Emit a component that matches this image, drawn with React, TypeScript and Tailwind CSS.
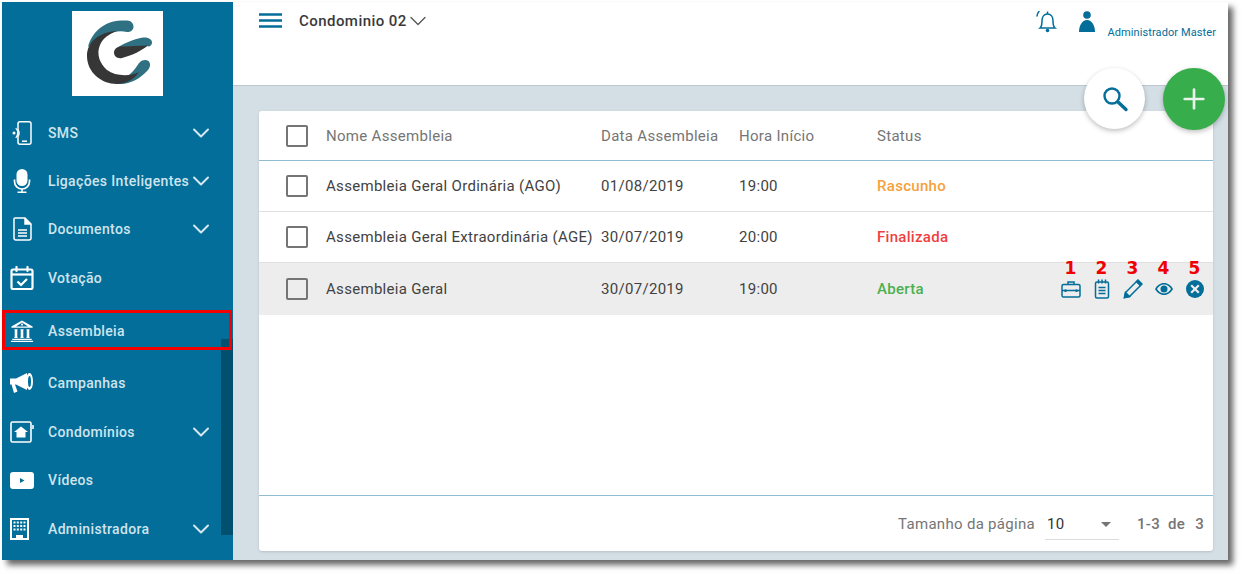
import React from 'react';
import { ChevronDown, Plus } from 'lucide-react';

const IconSms = () => (
  <svg width="24" height="24" viewBox="0 0 24 24" fill="none" stroke="currentColor" strokeWidth="1.500">
    <rect x="8" y="0.800" width="13" height="22.400" rx="2" />
    <path d="M12 20.200h5" />
    <path d="M8 8.500c1.400 2 1.400 5 0 7M5.800 7c2.200 2.800 2.200 7 0 10" strokeWidth="1.200" />
    <circle cx="4" cy="12" r="1.500" fill="currentColor" stroke="none" />
  </svg>
);

const IconMic = () => (
  <svg width="24" height="24" viewBox="0 0 24 24" fill="currentColor">
    <rect x="6.500" y="0" width="11" height="17" rx="5.500" />
    <path d="M4.500 10.500v2a7.500 7.500 0 0 0 15 0v-2" fill="none" stroke="currentColor" strokeWidth="1.700" />
    <path d="M12 20v3M7.500 23.200h9" fill="none" stroke="currentColor" strokeWidth="1.500" />
  </svg>
);

const IconDoc = () => (
  <svg width="24" height="24" viewBox="0 0 24 24" fill="none" stroke="currentColor" strokeWidth="1.500">
    <path d="M5 1h10l6 6v14a2 2 0 0 1-2 2H6a2 2 0 0 1-2-2V2a1 1 0 0 1 1-1z" />
    <path d="M15 1v6h6" fill="currentColor" />
    <path d="M8 13h9M8 16h9M8 19h9" />
  </svg>
);

const IconVote = () => (
  <svg width="24" height="24" viewBox="0 0 24 24" fill="none" stroke="currentColor" strokeWidth="2.200">
    <rect x="1.500" y="3.500" width="21" height="19.500" rx="1.500" />
    <path d="M1.500 8.500h21" />
    <path d="M6.500 1v4M17.500 1v4" strokeLinecap="round" />
    <path d="M7.500 15.500l3.500 3.500 6-6" />
  </svg>
);

const IconBank = () => (
  <svg width="24" height="24" viewBox="0 0 26 24" fill="currentColor">
    <path d="M13 0.500L1.500 7v1.500h23V7L13 0.500zm0 2.200l6.500 4.300h-13L13 2.700z" />
    <circle cx="13" cy="5" r="1.200" />
    <path d="M4.500 10h4l-.6 1v7.500l.6 1h-4l.6-1V11zM11 10h4l-.6 1v7.500l.6 1h-4l.6-1V11zM17.500 10h4l-.6 1v7.500l.6 1h-4l.6-1V11z" />
    <path d="M2.500 20.500h21v1.200h-21zM1 22.500h24V24H1z" />
  </svg>
);

const IconMegaphone = () => (
  <svg width="24" height="22" viewBox="0 0 24 22" fill="currentColor">
    <path d="M0 6.500h6L17 1v17L6 12.500H5l2.500 7-3.500 1.500-2.500-8.500H0z" />
    <ellipse cx="19.500" cy="9.500" rx="3.500" ry="8.500" />
    <ellipse cx="19.500" cy="9.500" rx="1.500" ry="5.500" fill="#026e99" />
  </svg>
);

const IconCondo = () => (
  <svg width="24" height="22" viewBox="0 0 24 22" fill="none" stroke="currentColor" strokeWidth="1.600">
    <rect x="1" y="1" width="20" height="20" rx="1.500" />
    <path d="M23 4v4" />
    <path d="M11 5.500l-7 5.500h2.500v5.500h9V11H18z" fill="currentColor" stroke="none" />
  </svg>
);

const IconVideo = () => (
  <svg width="24" height="17" viewBox="0 0 24 17" fill="currentColor">
    <path fillRule="evenodd" d="M3 0h18a3 3 0 0 1 3 3v11a3 3 0 0 1-3 3H3a3 3 0 0 1-3-3V3a3 3 0 0 1 3-3zm7 6v5l4.500-2.500z" />
  </svg>
);

const IconBuilding = () => (
  <svg className="-ml-[5px]" width="19" height="22" viewBox="0 0 19 22" fill="currentColor">
    <path
      fillRule="evenodd"
      d="M0 0h19v22H0zM2 2v18h4v-3h7v3h4V2zM3.500 3.500h2v2h-2zm3.300 0h2v2h-2zm3.400 0h2v2h-2zm3.300 0h2v2h-2zM3.500 7h2v2h-2zm3.300 0h2v2h-2zm3.400 0h2v2h-2zm3.300 0h2v2h-2zM3.500 10.500h2v2h-2zm3.300 0h2v2h-2zm3.400 0h2v2h-2zm3.300 0h2v2h-2z"
    />
  </svg>
);

const LogoMark = () => (
  <svg width="66" height="66" viewBox="0 0 66 66">
    <path d="M1 27C4 14 16 1 34 .5L40 .5C44 .5 46.500 3.500 46.500 6.500C46.500 10 44 12 40 12C30 10 18 12 1 27Z" fill="#2f7183" />
    <path d="M28 63.500C40 66 52 60 61 50C65 45 63 40 58 40C54 40 52 43 50 46C46 52 40 58 28 63.500Z" fill="#2f7183" />
    <path d="M28 29C36 24 46 19 56 17.500C62 17 65.500 20 65 23C64.500 26 62 27 60 26L34 27Z" fill="#2f7183" />
    <path d="M30 11C12 12 0 22 0 36C0 52 14 64 30 64C38 64 47 60 52 52C42 57 28 56 20 50C13 44 9 34 13 25C16 18 22 14 30 11Z" fill="#363636" />
    <path d="M33 26.500L61 25.500C54 31 46 35 35 38C30 39 27 36 27 32.500C27 29 30 27 33 26.500Z" fill="#363636" />
  </svg>
);

const IconHamburger = () => (
  <svg width="23" height="15" viewBox="0 0 23 15" stroke="#026e99" strokeWidth="2.400">
    <path d="M0 1.500h23M0 7.500h23M0 13.500h23" />
  </svg>
);

const IconBell = () => (
  <svg width="22" height="24" viewBox="0 0 22 24" fill="none" stroke="currentColor" strokeWidth="1.500">
    <path d="M4 18c1.800-1.500 2-3.500 2-7 0-4 2-7 5.500-7s5.500 3 5.500 7c0 3.500.2 5.500 2 7z" />
    <path d="M11.500 1.500V4" />
    <circle cx="11.500" cy="20.500" r="1.800" fill="currentColor" stroke="none" />
    <path d="M1 6c0-2 1-3.500 2-4.500" strokeLinecap="round" />
  </svg>
);

const IconUser = () => (
  <svg width="16" height="22" viewBox="0 0 16 22" fill="currentColor">
    <circle cx="8" cy="4" r="3.800" />
    <path d="M0 21c0-6 3-12 8-12s8 6 8 12z" />
  </svg>
);

const IconSearch = () => (
  <svg width="28" height="28" viewBox="0 0 28 28" fill="none" stroke="#026e99">
    <circle cx="11" cy="11" r="7.500" strokeWidth="2.400" />
    <path d="M17 17l8 7.500" strokeWidth="3.400" strokeLinecap="round" />
  </svg>
);

const IconCase = () => (
  <svg width="20" height="18" viewBox="0 0 20 18" fill="none" stroke="#026e99" strokeWidth="1.500">
    <rect x="1" y="4.500" width="18" height="12.500" rx="1.500" />
    <path d="M7 4.500V2h6v2.500M1 10.500h18" />
    <path d="M4.500 9.500v2.500M15.500 9.500v2.500" strokeWidth="2" />
  </svg>
);

const IconNotes = () => (
  <svg width="16" height="20" viewBox="0 0 16 20" fill="none" stroke="#026e99" strokeWidth="1.500">
    <rect x="1.500" y="3" width="13" height="16" rx="1.500" />
    <path d="M4.500 0.500v4M8 0.500v4M11.500 0.500v4" />
    <path d="M4.500 8.500h7M4.500 11.500h7M4.500 14.500h7" />
  </svg>
);

const IconPen = () => (
  <svg width="20" height="20" viewBox="0 0 20 20" fill="none" stroke="#026e99" strokeWidth="1.500">
    <path d="M1.500 18.500l1-5L13.500 2.500l4 4-11 11z" />
    <path d="M1.500 18.500l1-5 4 4z" fill="#026e99" />
    <path d="M13.500 2.500l1.500-1.500 4 4-1.500 1.500z" fill="#026e99" />
  </svg>
);

const IconEye = () => (
  <svg width="18" height="12" viewBox="0 0 18 12">
    <path d="M0 6c2-3.500 5-6 9-6s7 2.500 9 6c-2 3.500-5 6-9 6S2 9.500 0 6z" fill="#026e99" />
    <path d="M2 6c1.600-2.500 4-4.400 7-4.400S14.400 3.500 16 6c-1.600 2.500-4 4.400-7 4.400S3.600 8.500 2 6z" fill="#ededed" />
    <circle cx="9" cy="6" r="3.500" fill="#026e99" />
  </svg>
);

const IconClose = () => (
  <svg width="18" height="18" viewBox="0 0 18 18">
    <circle cx="9" cy="9" r="9" fill="#026e99" />
    <path d="M5.200 5.200l7.600 7.600M12.800 5.200l-7.600 7.600" stroke="#ededed" strokeWidth="2.200" />
  </svg>
);

const NAV_ITEMS = [
  { label: 'SMS', icon: <IconSms />, hasArrow: true, height: 'h-[48px]' },
  { label: 'Ligações Inteligentes', icon: <IconMic />, hasArrow: true, height: 'h-[48px]' },
  { label: 'Documentos', icon: <IconDoc />, hasArrow: true, height: 'h-[48px]' },
  { label: 'Votação', icon: <IconVote />, hasArrow: false, height: 'h-[50px]' },
  { label: 'Assembleia', icon: <IconBank />, hasArrow: false, height: 'h-[55px]', highlighted: true },
  { label: 'Campanhas', icon: <IconMegaphone />, hasArrow: false, height: 'h-[50px]' },
  { label: 'Condomínios', icon: <IconCondo />, hasArrow: true, height: 'h-[48px]' },
  { label: 'Vídeos', icon: <IconVideo />, hasArrow: false, height: 'h-[49px]' },
  { label: 'Administradora', icon: <IconBuilding />, hasArrow: true, height: 'h-[48px]' }
];

const ROWS = [
  { name: 'Assembleia Geral Ordinária (AGO)', date: '01/08/2019', time: '19:00', status: 'Rascunho', color: 'text-[#f5a13c]', height: 'h-[51px]' },
  { name: 'Assembleia Geral Extraordinária (AGE)', date: '30/07/2019', time: '20:00', status: 'Finalizada', color: 'text-[#ef3f3f]', height: 'h-[51px]' },
  { name: 'Assembleia Geral', date: '30/07/2019', time: '19:00', status: 'Aberta', color: 'text-[#4caf50]', height: 'h-[52px]', active: true }
];

const ACTIONS = [
  { num: '1', icon: <IconCase /> },
  { num: '2', icon: <IconNotes /> },
  { num: '3', icon: <IconPen /> },
  { num: '4', icon: <IconEye /> },
  { num: '5', icon: <IconClose /> }
];

function Checkbox() {
  return <div className="w-[22px] h-[22px] rounded-[2px] border-2 border-[#757575] shrink-0" />;
}

function Sidebar() {
  return (
    <aside className="relative w-[231px] shrink-0 bg-[#026e99] text-white flex flex-col">
      <div className="flex justify-center pt-[9px] h-[107px] pr-[1px]">
        <div className="w-[91px] h-[85px] bg-white flex items-center justify-center pl-[6px] pb-[1px]">
          <LogoMark />
        </div>
      </div>
      <nav className="flex flex-col">
        {NAV_ITEMS.map(item => (
          <div
            key={item.label}
            className={`${item.height} relative flex items-center pl-[8px] ${item.highlighted ? 'pt-[1px]' : ''}`}
          >
            <div className="w-[24px] flex justify-center shrink-0">{item.icon}</div>
            <span className="ml-[14px] text-[14px] font-medium tracking-[0.35px] text-[#cfe4ee] whitespace-nowrap">
              {item.label}
            </span>
            {item.hasArrow && (
              <ChevronDown className="absolute left-[185px] top-1/2 -translate-y-1/2 w-[28px] h-[28px] text-[#d8e8f0]" strokeWidth={1.7} />
            )}
          </div>
        ))}
      </nav>
      {/* scrollbar */}
      <div className="absolute left-[219px] top-[337px] w-[12px] h-[196px] bg-[#024f6f]" />
      {/* destaque da imagem */}
      <div className="absolute left-[0px] top-[308px] w-[230px] h-[40px] border-[3px] border-[#f50000]" />
    </aside>
  );
}

function Header() {
  return (
    <header className="h-[84px] shrink-0 bg-white border-b border-[#bcc8cf] flex items-start relative">
      <div className="ml-[26px] mt-[11px]">
        <IconHamburger />
      </div>
      <div className="ml-[17px] mt-[8px] flex items-center text-[15px] font-medium text-[#3a3a3a] tracking-[0.45px]">
        Condominio 02
        <ChevronDown className="-ml-[3px] w-[28px] h-[28px] -my-[4px] text-[#555]" strokeWidth={1.1} />
      </div>
      <div className="ml-auto flex items-start text-[#026e99]">
        <div className="mt-[8px]">
          <IconBell />
        </div>
        <div className="ml-[21px] mt-[9px]">
          <IconUser />
        </div>
        <span className="ml-[12px] mt-[23px] mr-[12px] text-[11px] tracking-[0.1px]">Administrador Master</span>
      </div>
    </header>
  );
}

function Table() {
  return (
    <div className="w-[954px] h-[440px] bg-white rounded-[3px] flex flex-col shadow-sm">
      <div className="h-[50px] shrink-0 flex items-center border-b border-[#8dbcd4] text-[15px] text-[#757575] tracking-[0.3px]">
        <div className="ml-[27px] mr-[18px]">
          <Checkbox />
        </div>
        <span className="w-[275px] pt-[1px]">Nome Assembleia</span>
        <span className="w-[138px] pt-[1px]">Data Assembleia</span>
        <span className="w-[138px] pt-[1px]">Hora Início</span>
        <span className="pt-[1px]">Status</span>
      </div>
      <div className="flex-1">
        {ROWS.map(row => (
          <div
            key={row.name}
            className={`${row.height} relative flex items-center text-[15px] text-[#424242] tracking-[0.3px] ${row.active ? 'bg-[#ededed]' : 'border-b border-[#e0e0e0]'}`}
          >
            <div className="ml-[27px] mr-[18px]">
              <Checkbox />
            </div>
            <span className="w-[275px] whitespace-nowrap">{row.name}</span>
            <span className="w-[138px]">{row.date}</span>
            <span className="w-[138px]">{row.time}</span>
            <span className={`font-medium ${row.color}`}>{row.status}</span>
            {row.active && (
              <div className="absolute left-[796px] top-[-5px] flex">
                {ACTIONS.map(action => (
                  <div key={action.num} className="w-[31px] flex flex-col items-center">
                    <span className="h-[20px] text-[17px] leading-[20px] font-bold text-[#f00000] font-['DejaVu_Sans',sans-serif]">
                      {action.num}
                    </span>
                    <div className="h-[22px] flex items-center justify-center">{action.icon}</div>
                  </div>
                ))}
              </div>
            )}
          </div>
        ))}
      </div>
      <div className="h-[56px] shrink-0 border-t border-[#8dbcd4] flex items-center justify-end pt-[1px] pr-[9px] text-[15px] text-[#757575] tracking-[0.3px]">
        <span>Tamanho da página</span>
        <div className="ml-[10px] w-[74px] h-[31px] mt-[1px] border-b border-[#dcdcdc] flex items-center justify-between text-[#333] pl-[2px] pr-[8px]">
          <span>10</span>
          <span className="w-0 h-0 border-x-[5px] border-x-transparent border-t-[5px] border-t-[#757575]" />
        </div>
        <span className="ml-[18px] font-medium">1-3</span>
        <span className="ml-[8px] font-medium">de</span>
        <span className="ml-[10px] font-medium">3</span>
      </div>
    </div>
  );
}

export default function App() {
  return (
    <div className="w-[1242px] h-[574px] bg-white pt-[2px] pl-[2px] overflow-hidden font-['Roboto',sans-serif]">
      <div className="relative w-[1226px] h-[558px] flex shadow-[5px_5px_6px_rgba(0,0,0,0.6)]">
        <Sidebar />
        <main className="flex-1 min-w-0 flex flex-col bg-[#d3dee5]">
          <Header />
          <div className="pt-[25px] pl-[26px]">
            <Table />
          </div>
        </main>
        <button
          type="button"
          className="absolute left-[1082px] top-[66px] w-[61px] h-[61px] rounded-full bg-white shadow-[0_2px_5px_rgba(0,0,0,0.25)] flex items-center justify-center"
        >
          <IconSearch />
        </button>
        <button
          type="button"
          className="absolute left-[1161px] top-[66px] w-[62px] h-[62px] rounded-full bg-[#37ad4b] shadow-[0_2px_5px_rgba(0,0,0,0.25)] flex items-center justify-center"
        >
          <Plus className="w-[32px] h-[32px] text-[#e8f5ea]" strokeWidth={2} />
        </button>
      </div>
    </div>
  );
}
